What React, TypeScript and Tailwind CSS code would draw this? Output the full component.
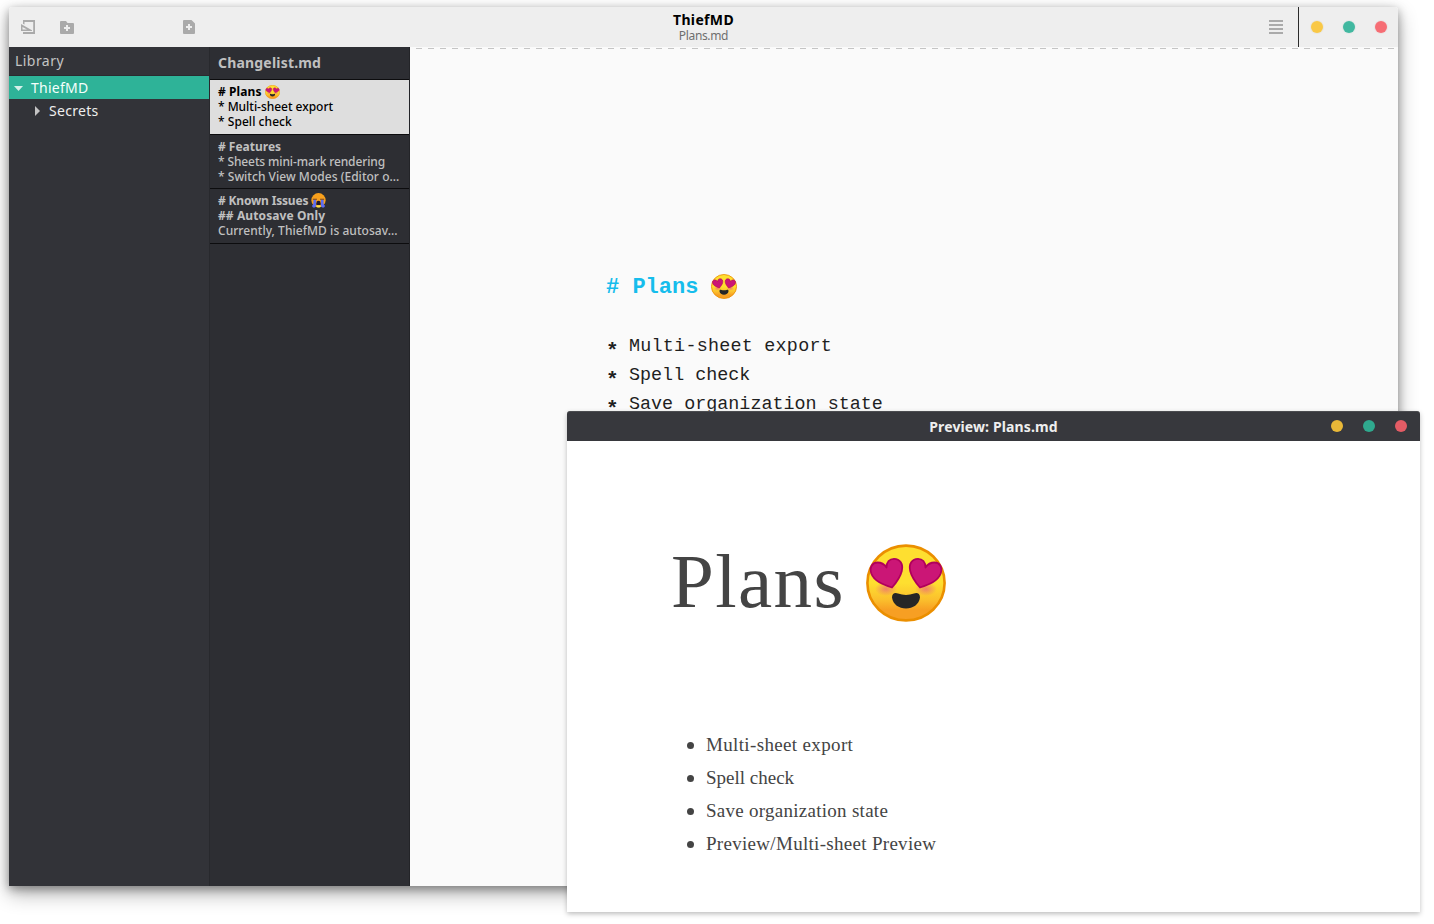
import React from "react";

type IconProps = { className?: string };

function HeartEyes({ className = "" }: IconProps) {
  return (
    <svg viewBox="0 0 80 78" preserveAspectRatio="none" className={className} aria-hidden="true">
      <defs>
        <linearGradient id="face" x1="0" y1="0" x2="0" y2="1">
          <stop offset="0.5" stopColor="#fedf30" />
          <stop offset="0.72" stopColor="#fbc02d" />
          <stop offset="0.86" stopColor="#f79f23" />
        </linearGradient>
        <radialGradient id="blush">
          <stop offset="0" stopColor="#ed7770" stopOpacity="0.85" />
          <stop offset="1" stopColor="#ed7770" stopOpacity="0" />
        </radialGradient>
      </defs>
      <ellipse cx="40" cy="39" rx="38.6" ry="37.4" fill="url(#face)" stroke="#eb8f00" strokeWidth="2.6" />
      <ellipse cx="20" cy="45" rx="11" ry="7" fill="url(#blush)" />
      <ellipse cx="60" cy="45" rx="11" ry="7" fill="url(#blush)" />
      <g fill="#cb1676" stroke="#b0005c" strokeWidth="1.8" strokeLinejoin="round">
        <path d="M26 43.5C17 40.500 8 37 5.300 29.500C3 22.500 7 18.500 11.500 18.500C16 18.500 18.500 20.500 20.500 23.500C20.500 18 23.500 14.800 28 14.800C34 14.800 37.500 20 35.800 27C34.300 33 30 39 26 43.500Z" />
        <path d="M54 43.5C63 40.500 72 37 74.700 29.500C77 22.500 73 18.500 68.500 18.500C64 18.500 61.500 20.500 59.500 23.500C59.500 18 56.500 14.800 52 14.800C46 14.800 42.500 20 44.200 27C45.700 33 50 39 54 43.500Z" />
      </g>
      <path d="M26 53.500C26 49.500 29 48.300 32 49.600C37 51.300 43 51.300 48 49.600C51 48.300 54 49.500 54 53.500C53 60.500 47 64.500 40 64.500C33 64.500 27 60.500 26 53.500Z" fill="#262626" />
    </svg>
  );
}

function Sobbing({ className = "" }: IconProps) {
  return (
    <svg viewBox="0 0 28 28" className={className} aria-hidden="true">
      <circle cx="14" cy="13.500" r="13.300" fill="#f8a01c" />
      <path d="M3.500 11.500h7.500M17 11.500H24.500" stroke="#6b4030" strokeWidth="2" />
      <path d="M4.500 13h5v11q0 3-4 3.500q-4-.5-3.500-4q2.500-1 2.500-4zM18.500 13h5v6.500q0 3 2.500 4q.5 3.500-3.500 4q-4-.5-4-3.500z" fill="#5d6cf0" />
      <path d="M10 19q0-4.500 4-4.500t4 4.500v4H10z" fill="#241a2e" />
      <path d="M10 23h8v3q-4 2-8 0z" fill="#ffe14a" />
    </svg>
  );
}

function Dots({ dark = false }: { dark?: boolean }) {
  return (
    <div className="flex gap-5">
      <i className={`size-3 rounded-full ${dark ? "bg-[#e9b838]" : "bg-[#f9c846] ring-1 ring-[#e9e6dd]"}`} />
      <i className={`size-3 rounded-full ${dark ? "bg-[#2fa98e]" : "bg-[#41b8a0] ring-1 ring-[#e2e8e6]"}`} />
      <i className={`size-3 rounded-full ${dark ? "bg-[#e45c65]" : "bg-[#f66d74] ring-1 ring-[#ebe3e3]"}`} />
    </div>
  );
}

function HeaderBar() {
  return (
    <header className="grid h-10 shrink-0 grid-cols-[1fr_auto_1fr] rounded-t-[3px] bg-[#eeeeee]">
      <div className="flex items-center pl-3 text-[#aaaaaa]">
        <svg width="14" height="14" viewBox="0 0 14 14" fill="currentColor">
          <path d="M2 0H14V14H2V12H12.200V2H3.500V4.500L2 3.700Z" />
          <path fillRule="evenodd" d="M0 4L11 10.200V11H0ZM1.500 7V9.500H6Z" />
        </svg>
        <svg className="ml-[25px]" width="14" height="14" viewBox="0 0 14 14" fill="currentColor">
          <path fillRule="evenodd" d="M1 1H6L7.500 3H13Q14 3 14 4V13Q14 14 13 14H1Q0 14 0 13V2Q0 1 1 1ZM6 5V7H4V9H6V11H8V9H10V7H8V5Z" />
        </svg>
        <svg className="ml-[109px]" width="12" height="14" viewBox="0 0 12 14" fill="currentColor">
          <path fillRule="evenodd" d="M1 0H8.500L12 3.500V13Q12 14 11 14H1Q0 14 0 13V1Q0 0 1 0ZM5 4V6H3V8H5V10H7V8H9V6H7V4Z" />
        </svg>
      </div>
      <div className="flex flex-col items-center pt-[5px]">
        <div className="text-[14px] leading-4 font-bold tracking-[0.35px] text-black">ThiefMD</div>
        <div className="text-[12px] leading-[15px] tracking-[-0.35px] text-[#6e6e6e]">Plans.md</div>
      </div>
      <div className="flex items-center justify-end pr-[11px]">
        <div className="mr-[15px] flex flex-col gap-0.5">
          <i className="h-0.5 w-3.5 bg-[#aaaaaa]" />
          <i className="h-0.5 w-3.5 bg-[#aaaaaa]" />
          <i className="h-0.5 w-3.5 bg-[#aaaaaa]" />
          <i className="h-0.5 w-3.5 bg-[#aaaaaa]" />
        </div>
        <div className="mr-3 h-full w-px bg-[#2b2b2b]" />
        <Dots />
      </div>
    </header>
  );
}

function Library() {
  return (
    <nav className="flex w-[201px] shrink-0 flex-col border-r border-[#28292d] bg-[#323338] text-[14px]">
      <div className="h-[29px] border-b border-[#2a2b2f] pl-1.5 leading-7 tracking-[0.45px] text-[#c4c4c4]">Library</div>
      <div className="flex h-[23px] items-center bg-[#2eb398] pl-[5px] text-[#f4fffc]">
        <svg className="mr-2 mt-px" width="9" height="5" viewBox="0 0 9 5" fill="#d5f0ea"><path d="M0 0H9L4.500 5Z" /></svg>
        <span className="tracking-[0.25px]">ThiefMD</span>
      </div>
      <div className="flex h-[23px] items-center pl-[26px] text-[#eeeeee]">
        <svg className="mr-[9px]" width="5" height="10" viewBox="0 0 5 10" fill="#c4c4c4"><path d="M0 0L5 5L0 10Z" /></svg>
        <span className="tracking-[0.3px]">Secrets</span>
      </div>
    </nav>
  );
}

function Sheets() {
  return (
    <section className="flex w-[200px] shrink-0 flex-col border-r border-[#232428] bg-[#2d2e33] text-[12px] leading-[15px] font-medium whitespace-nowrap text-[#c0c0c0]">
      <div className="h-[33px] border-b border-[#0c0c0e] pl-2 text-[14px] leading-8 font-bold tracking-[0.19px]">Changelist.md</div>
      <div className="h-[55px] border-b border-[#0c0c0e] bg-[#dedede] pt-1 pl-2 text-black">
        <div className="flex items-center font-bold tracking-[0.1px]"># Plans<HeartEyes className="ml-[3px] h-3.5 w-[15px]" /></div>
        <div className="tracking-[-0.03px]">* Multi-sheet export</div>
        <div className="tracking-[0.05px]">* Spell check</div>
      </div>
      <div className="h-[54px] border-b border-[#0c0c0e] pt-1 pl-2">
        <div className="font-bold"># Features</div>
        <div className="tracking-[-0.12px]">* Sheets mini-mark rendering</div>
        <div className="tracking-[0.03px]">* Switch View Modes (Editor o...</div>
      </div>
      <div className="h-[55px] border-b border-[#0c0c0e] pt-1 pl-2">
        <div className="flex items-center font-bold tracking-[-0.18px]"># Known Issues<Sobbing className="ml-[3px] size-[15px]" /></div>
        <div className="font-bold tracking-[0.1px]">## Autosave Only</div>
        <div className="tracking-[0.05px]">Currently, ThiefMD is autosav...</div>
      </div>
    </section>
  );
}

function EditorLine({ children }: { children: React.ReactNode }) {
  return (
    <div className="flex h-[29px] leading-[29px] whitespace-pre">
      <b className="-ml-px w-[23px] pt-[5px] text-[21px]">*</b>
      {children}
    </div>
  );
}

function Editor() {
  return (
    <main className="min-w-0 flex-1 bg-[#fafafa] font-['Liberation_Mono',monospace]">
      <div className="mt-px ml-1.5 h-px bg-[repeating-linear-gradient(90deg,#c4c4c4_0_6px,transparent_6px_12px)]" />
      <div className="pt-[223px] pl-[197px]">
        <div className="-ml-px flex h-[30px] items-center text-[22px] font-bold whitespace-pre text-[#16bdec]">
          # Plans<HeartEyes className="mb-0.5 ml-[13px] h-[25px] w-[26px]" />
        </div>
        <div className="pt-[30px] text-[18.4px] text-[#1f1f1f]">
          <EditorLine><span className="tracking-[0.24px]">Multi-sheet export</span></EditorLine>
          <EditorLine>Spell check</EditorLine>
          <EditorLine>Save organization state</EditorLine>
        </div>
      </div>
    </main>
  );
}

function Bullet({ children }: { children: React.ReactNode }) {
  return (
    <li className="flex h-[33px] items-center">
      <i className="mr-3 size-[7px] rounded-full bg-[#444444]" />
      {children}
    </li>
  );
}

function Preview() {
  return (
    <aside className="absolute top-[411px] left-[567px] flex h-[501px] w-[853px] flex-col rounded-t-[3px] bg-white shadow-[0_2px_5px_rgba(0,0,0,0.25)]">
      <header className="grid h-[30px] shrink-0 grid-cols-[1fr_auto_1fr] items-center rounded-t-[3px] border-t border-[#4b4c50] bg-[#37383d] pb-px">
        <span />
        <span className="text-[14px] font-bold tracking-[0.12px] text-[#eeeeee]">Preview: Plans.md</span>
        <div className="flex justify-end pr-[13px]"><Dots dark /></div>
      </header>
      <div className="pt-[90px] pl-[104px] font-['Liberation_Serif',serif] text-[#444444]">
        <h1 className="flex h-[100px] items-center text-[77px] leading-[100px] tracking-[1.4px]">
          Plans<HeartEyes className="mt-[3px] ml-[21px] h-[78px] w-20" />
        </h1>
        <ul className="pt-[98px] pl-4 text-[19px]">
          <Bullet><span className="tracking-[0.35px]">Multi-sheet export</span></Bullet>
          <Bullet><span>Spell check</span></Bullet>
          <Bullet><span className="tracking-[0.27px]">Save organization state</span></Bullet>
          <Bullet><span className="tracking-[0.3px]">Preview/Multi-sheet Preview</span></Bullet>
        </ul>
      </div>
    </aside>
  );
}

export default function App() {
  return (
    <div className="relative h-[924px] w-[1434px] overflow-hidden bg-white pt-[7px] pl-[9px] font-['Noto_Sans',sans-serif]">
      <div className="flex h-[879px] w-[1389px] flex-col rounded-t-[3px] shadow-[0_8px_20px_rgba(0,0,0,0.3),0_3px_10px_rgba(0,0,0,0.35)]">
        <HeaderBar />
        <div className="flex min-h-0 flex-1">
          <Library />
          <Sheets />
          <Editor />
        </div>
      </div>
      <Preview />
    </div>
  );
}
